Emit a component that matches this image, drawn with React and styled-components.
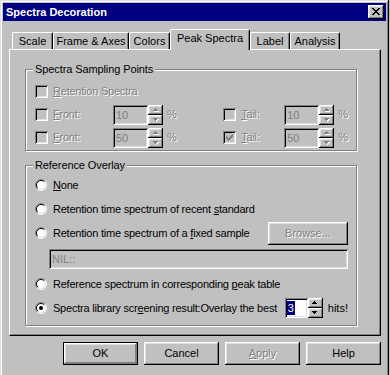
import React from 'react';
import styled, { createGlobalStyle } from 'styled-components';

const GlobalStyle = createGlobalStyle`
  html, body { margin: 0; padding: 0; background: #c0c0c0; }
  body {
    font-family: "Liberation Sans", Arial, sans-serif;
    font-size: 11px;
    color: #000;
    overflow: hidden;
  }
`;

const raised = `
  box-shadow: inset -1px -1px #000, inset 1px 1px #fff,
    inset -2px -2px #808080, inset 2px 2px #dfdfdf;
`;
const sunken = `
  box-shadow: inset 1px 1px #808080, inset -1px -1px #fff,
    inset 2px 2px #000, inset -2px -2px #dfdfdf;
`;

const Window = styled.div`
  width: 389px;
  height: 380px;
  box-sizing: border-box;
  padding: 3px;
  background: #c0c0c0;
  box-shadow: inset -1px -1px #000, inset 1px 1px #dfdfdf,
    inset -2px -2px #808080, inset 2px 2px #fff;
  display: flex;
  flex-direction: column;
`;

const TitleBar = styled.div`
  height: 18px;
  background: #000080;
  display: flex;
  align-items: center;
  justify-content: space-between;
  padding: 0 2px 0 3px;
`;

const Title = styled.span`
  color: #fff;
  font-weight: bold;
  font-size: 11px;
  line-height: 13px;
`;

const CloseButton = styled.div`
  width: 16px;
  height: 14px;
  background: #c0c0c0;
  ${raised}
  display: flex;
  align-items: center;
  justify-content: center;
  padding-bottom: 1px;
  box-sizing: border-box;
`;

const TabStrip = styled.div`
  display: flex;
  align-items: flex-end;
  height: 20px;
  margin: 8px 0 0 9px;
  position: relative;
  z-index: 1;
`;

const Tab = styled.div`
  box-sizing: border-box;
  width: ${p => p.$w}px;
  height: ${p => (p.$active ? 21 : 17)}px;
  margin-bottom: ${p => (p.$active ? -1 : 0)}px;
  background: #c0c0c0;
  border-left: 1px solid #fff;
  border-top: 1px solid #fff;
  border-right: 1px solid #000;
  border-radius: 2px 2px 0 0;
  box-shadow: inset -1px 0 #808080;
  display: flex;
  justify-content: center;
  align-items: center;
  padding-bottom: ${p => (p.$active ? 4 : 0)}px;
  line-height: 13px;
  white-space: nowrap;
`;

const Panel = styled.div`
  box-sizing: border-box;
  width: 372px;
  height: 287px;
  margin-left: 6px;
  border-top: 1px solid #fff;
  border-left: 1px solid #fff;
  border-right: 1px solid #000;
  border-bottom: 1px solid #000;
  box-shadow: inset -1px -1px #808080;
  padding: 19px 0 0 15px;
`;

const Group = styled.div`
  position: relative;
  box-sizing: border-box;
  width: 332px;
  height: ${p => p.$h}px;
  margin-top: ${p => p.$top || 0}px;
  border: 1px solid #808080;
  box-shadow: inset 1px 1px #fff, 1px 1px #fff;
  padding: ${p => p.$pad}px 8px 0 9px;
`;

const Legend = styled.span`
  position: absolute;
  top: -7px;
  left: 7px;
  padding: 0 2px;
  background: #c0c0c0;
  line-height: 13px;
  letter-spacing: -0.1px;
`;

const Row = styled.div`
  display: flex;
  align-items: center;
  height: ${p => p.$h || 23}px;
`;

const FieldRow = styled.div`
  display: flex;
  align-items: flex-start;
  box-sizing: border-box;
  height: 27px;
  padding-top: 4px;
`;

const Half = styled.div`
  display: flex;
  align-items: center;
  width: ${p => (p.$w ? `${p.$w}px` : 'auto')};
`;

const Label = styled.span`
  margin-left: ${p => p.$gap ?? 5}px;
  width: ${p => (p.$w ? `${p.$w}px` : 'auto')};
  white-space: nowrap;
  line-height: 13px;
  letter-spacing: -0.22px;
  color: ${p => (p.$disabled ? '#808080' : '#000')};
  text-shadow: ${p => (p.$disabled ? '1px 1px #fff' : 'none')};
`;

const Key = styled.span`
  text-decoration: underline;
`;

const CheckBox = styled.div`
  width: 13px;
  height: 13px;
  flex: none;
  background: ${p => (p.$disabled ? '#c0c0c0' : '#fff')};
  ${sunken}
  display: flex;
  align-items: center;
  justify-content: center;
`;

const Edit = styled.div`
  box-sizing: border-box;
  width: ${p => (p.$w ? `${p.$w}px` : 'auto')};
  flex: ${p => (p.$w ? 'none' : 1)};
  height: 20px;
  margin-left: ${p => (p.$push ? 'auto' : `${p.$ml || 0}px`)};
  background: ${p => (p.$disabled ? '#c0c0c0' : '#fff')};
  ${sunken}
  padding: 3px 3px 0;
  line-height: 14px;
  color: ${p => (p.$disabled ? '#808080' : '#000')};
  white-space: nowrap;
`;

const Selected = styled.span`
  background: #000080;
  color: #fff;
  display: inline-block;
  padding: 0 1px;
  margin-left: -1px;
`;

const Spinner = styled.div`
  display: flex;
  flex-direction: column;
  width: 15px;
  height: 20px;
  flex: none;
`;

const SpinHalf = styled.div`
  flex: 1;
  background: #c0c0c0;
  ${raised}
  display: flex;
  align-items: center;
  justify-content: center;
`;

const Unit = styled.span`
  margin-left: ${p => p.$ml || 4}px;
  line-height: 13px;
  color: ${p => (p.$disabled ? '#808080' : '#000')};
  text-shadow: ${p => (p.$disabled ? '1px 1px #fff' : 'none')};
`;

const Button = styled.div`
  box-sizing: border-box;
  width: ${p => p.$w || 75}px;
  height: 23px;
  flex: none;
  margin-left: ${p => (p.$push ? 'auto' : '0')};
  background: #c0c0c0;
  ${p =>
    p.$default
      ? `border: 1px solid #000; box-shadow: inset -1px -1px #808080, inset 1px 1px #fff, inset -2px -2px #808080, inset 2px 2px #dfdfdf;`
      : raised}
  display: flex;
  align-items: center;
  justify-content: center;
  line-height: 13px;
  color: ${p => (p.$disabled ? '#808080' : '#000')};
  text-shadow: ${p => (p.$disabled ? '1px 1px #fff' : 'none')};
`;

const ButtonRow = styled.div`
  display: flex;
  justify-content: flex-end;
  gap: 6px;
  width: 372px;
  margin: 6px 0 0 6px;
`;

const Pixels = ({ rows, color, w, h, shadow }) => (
  <svg width={w} height={h} viewBox={`0 0 ${w} ${h}`} shapeRendering="crispEdges">
    {shadow &&
      rows.map(([x, y, len], i) => (
        <rect key={`s${i}`} x={x + 1} y={y + 1} width={len} height={1} fill="#fff" />
      ))}
    {rows.map(([x, y, len], i) => (
      <rect key={i} x={x} y={y} width={len} height={1} fill={color} />
    ))}
  </svg>
);

const CloseX = () => (
  <Pixels
    w={8}
    h={7}
    color="#000"
    rows={[
      [0, 0, 2], [6, 0, 2],
      [1, 1, 2], [5, 1, 2],
      [2, 2, 4],
      [3, 3, 2],
      [2, 4, 4],
      [1, 5, 2], [5, 5, 2],
      [0, 6, 2], [6, 6, 2],
    ]}
  />
);

const CheckMark = ({ color }) => (
  <Pixels
    w={7}
    h={7}
    color={color}
    rows={[
      [6, 0, 1],
      [5, 1, 2],
      [0, 2, 1], [4, 2, 3],
      [0, 3, 2], [3, 3, 3],
      [0, 4, 5],
      [1, 5, 3],
      [2, 6, 1],
    ]}
  />
);

const Arrow = ({ up, disabled }) => (
  <Pixels
    w={6}
    h={4}
    color={disabled ? '#808080' : '#000'}
    shadow={disabled}
    rows={up ? [[2, 0, 1], [1, 1, 3], [0, 2, 5]] : [[0, 0, 5], [1, 1, 3], [2, 2, 1]]}
  />
);

const Check = ({ checked, disabled }) => (
  <CheckBox $disabled={disabled}>
    {checked && <CheckMark color={disabled ? '#808080' : '#000'} />}
  </CheckBox>
);

const Spin = ({ disabled }) => (
  <Spinner>
    <SpinHalf><Arrow up disabled={disabled} /></SpinHalf>
    <SpinHalf><Arrow disabled={disabled} /></SpinHalf>
  </Spinner>
);

const Radio = ({ checked }) => (
  <svg width="12" height="12" viewBox="0 0 12 12" style={{ flex: 'none' }}>
    <circle cx="6" cy="6" r="5" fill="#fff" />
    <path d="M2.1 9.9 A5.5 5.5 0 0 1 9.9 2.1" fill="none" stroke="#808080" strokeWidth="1" />
    <path d="M9.9 2.1 A5.5 5.5 0 0 1 2.1 9.9" fill="none" stroke="#fff" strokeWidth="1" />
    <path d="M2.8 9.2 A4.5 4.5 0 0 1 9.2 2.8" fill="none" stroke="#000" strokeWidth="1" />
    <path d="M9.2 2.8 A4.5 4.5 0 0 1 2.8 9.2" fill="none" stroke="#dfdfdf" strokeWidth="1" />
    {checked && <circle cx="6" cy="6" r="2" fill="#000" />}
  </svg>
);

const tabs = [
  { label: 'Scale', w: 41 },
  { label: 'Frame & Axes', w: 76 },
  { label: 'Colors', w: 41 },
  { label: 'Peak Spectra', w: 80, active: true },
  { label: 'Label', w: 40 },
  { label: 'Analysis', w: 50 },
];

const PercentField = ({ label, labelW, value, checked }) => (
  <>
    <Check disabled checked={checked} />
    <Label $disabled $w={labelW}>
      <Key>{label[0]}</Key>{label.slice(1)}
    </Label>
    <Edit $disabled $w={35}>{value}</Edit>
    <Spin disabled />
    <Unit $disabled>%</Unit>
  </>
);

export default function App() {
  return (
    <Window>
      <GlobalStyle />
      <TitleBar>
        <Title>Spectra Decoration</Title>
        <CloseButton><CloseX /></CloseButton>
      </TitleBar>

      <TabStrip>
        {tabs.map(t => (
          <Tab key={t.label} $w={t.w} $active={t.active}>{t.label}</Tab>
        ))}
      </TabStrip>

      <Panel>
        <Group $h={82} $pad={10}>
          <Legend>Spectra Sampling Points</Legend>
          <Row>
            <Check disabled />
            <Label $disabled><Key>R</Key>etention Spectra</Label>
          </Row>
          <Row>
            <Half $w={191}>
              <PercentField label="Front:" labelW={60} value="10" />
            </Half>
            <Half>
              <PercentField label="Tail:" labelW={43} value="10" />
            </Half>
          </Row>
          <Row>
            <Half $w={191}>
              <PercentField label="Front:" labelW={60} value="50" />
            </Half>
            <Half>
              <PercentField label="Tail:" labelW={43} value="50" checked />
            </Half>
          </Row>
        </Group>

        <Group $h={161} $top={14} $pad={7}>
          <Legend>Reference Overlay</Legend>
          <Row $h={24}>
            <Radio />
            <Label $gap={6}><Key>N</Key>one</Label>
          </Row>
          <Row $h={24}>
            <Radio />
            <Label $gap={6}>Retention time spectrum of recent <Key>s</Key>tandard</Label>
          </Row>
          <Row $h={24}>
            <Radio />
            <Label $gap={6}>Retention time spectrum of a <Key>f</Key>ixed sample</Label>
            <Button $w={80} $push $disabled>Browse...</Button>
          </Row>
          <FieldRow>
            <Edit $disabled $ml={14}>NIL::</Edit>
          </FieldRow>
          <Row $h={24}>
            <Radio />
            <Label $gap={6}>Reference spectrum in corresponding <Key>p</Key>eak table</Label>
          </Row>
          <Row $h={24}>
            <Radio checked />
            <Label $gap={6}>Spectra library scr<Key>e</Key>ening result:Overlay the best</Label>
            <Edit $w={23} $push><Selected>3</Selected></Edit>
            <Spin />
            <Unit $ml={5}>hits!</Unit>
          </Row>
        </Group>
      </Panel>

      <ButtonRow>
        <Button $default>OK</Button>
        <Button>Cancel</Button>
        <Button $disabled><Key>A</Key>pply</Button>
        <Button>Help</Button>
      </ButtonRow>
    </Window>
  );
}
